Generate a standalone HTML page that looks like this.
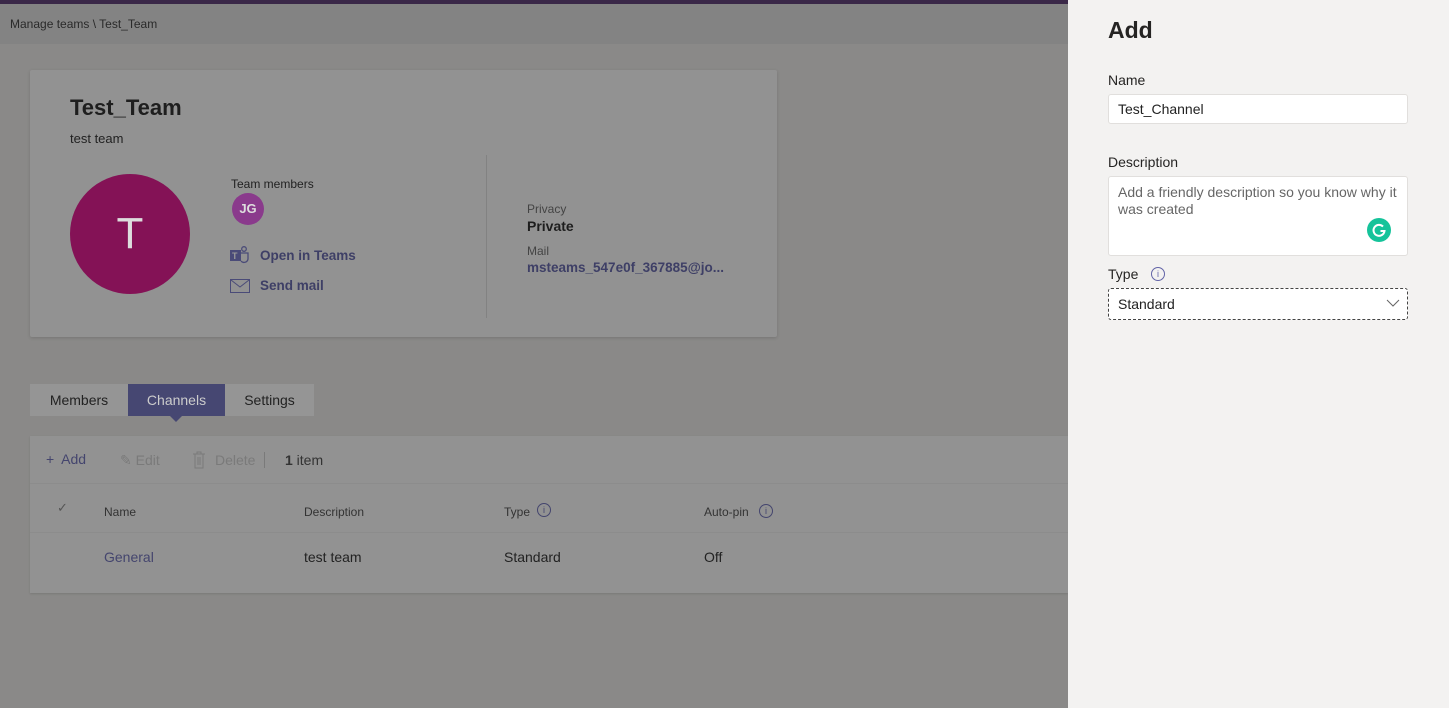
<!DOCTYPE html>
<html><head><meta charset="utf-8"><style>
*{box-sizing:border-box;margin:0;padding:0}
body{width:1449px;height:708px;overflow:hidden;background:#8a8988;font-family:"Liberation Sans",sans-serif;position:relative;color:#222}
.abs{position:absolute}
.top{left:0;top:0;width:1068px;height:4px;background:#3a2848}
.hdr{left:0;top:4px;width:1068px;height:40px;background:#838383;font-size:12px;color:#2a2a2a;padding:13px 10px}
.card{left:30px;top:70px;width:747px;height:267px;background:#929292;box-shadow:0 1px 3px rgba(0,0,0,.15);border-radius:2px}
.av{left:70px;top:174px;width:120px;height:120px;border-radius:50%;background:#841256;color:#ddd;font-size:44px;text-align:center;line-height:120px}
.jg{left:232px;top:193px;width:32px;height:32px;border-radius:50%;background:#8a3a8c;color:#ddd;font-size:13px;font-weight:bold;text-align:center;line-height:32px}
.lnk{color:#3e3f66;font-weight:bold;font-size:13.5px}
.tabs{left:30px;top:384px;width:284px;height:32px;background:#959595;font-size:14px;color:#222}
.tab{position:absolute;top:0;height:32px;line-height:32px;text-align:center}
.tbl{left:30px;top:436px;width:1038px;height:157px;background:#929292;box-shadow:0 1px 2px rgba(0,0,0,.12)}
.panel{left:1068px;top:0;width:381px;height:708px;background:#f3f2f1}
.inp{position:absolute;left:40px;width:300px;background:#fff;border:1px solid #e1dfdd;border-radius:3px;font-size:14px;color:#222;padding-left:9px}
.lbl{position:absolute;left:40px;font-size:14px;color:#252423}
</style></head><body>
<div class="abs top"></div>
<div class="abs hdr">Manage teams \ Test_Team</div>
<div class="abs card"></div>
<div class="abs" style="left:70px;top:95px;font-size:22px;font-weight:bold;color:#1e1e1e">Test_Team</div>
<div class="abs" style="left:70px;top:131px;font-size:13px;color:#222">test team</div>
<div class="abs av">T</div>
<div class="abs" style="left:231px;top:177px;font-size:12px;color:#222">Team members</div>
<div class="abs jg">JG</div>
<svg class="abs" style="left:229px;top:246px" width="22" height="20" viewBox="0 0 22 20"><rect x="1" y="4" width="11" height="11" fill="#4a4b78"/><text x="3" y="13" font-size="9" fill="#999" font-family="Liberation Sans" font-weight="bold">T</text><circle cx="15" cy="3" r="2.3" fill="none" stroke="#4a4b78" stroke-width="1.3"/><path d="M12 7h7v6a4 4 0 0 1-7 2" fill="none" stroke="#4a4b78" stroke-width="1.3"/></svg>
<div class="abs lnk" style="left:260px;top:248px">Open in Teams</div>
<svg class="abs" style="left:230px;top:279px" width="20" height="14"><rect x="0.5" y="0.5" width="19" height="13" fill="none" stroke="#4a4b78"/><path d="M1 1l9 7 9-7" fill="none" stroke="#4a4b78"/></svg>
<div class="abs lnk" style="left:260px;top:278px">Send mail</div>
<div class="abs" style="left:486px;top:155px;width:1px;height:163px;background:#828282"></div>
<div class="abs" style="left:527px;top:202px;font-size:12px;color:#444">Privacy</div>
<div class="abs" style="left:527px;top:218px;font-size:14px;font-weight:bold;color:#1e1e1e">Private</div>
<div class="abs" style="left:527px;top:244px;font-size:12px;color:#444">Mail</div>
<div class="abs lnk" style="left:527px;top:260px">msteams_547e0f_367885@jo...</div>
<div class="abs tabs">
<div class="tab" style="left:0;width:98px">Members</div>
<div class="tab" style="left:98px;width:97px;background:#464772;color:#ccc">Channels</div>
<div class="tab" style="left:195px;width:89px">Settings</div>
</div>
<div class="abs" style="left:170px;top:416px;width:0;height:0;border-left:6px solid transparent;border-right:6px solid transparent;border-top:6px solid #464772"></div>
<div class="abs tbl"></div>
<div class="abs" style="left:30px;top:483px;width:1038px;height:1px;background:#8c8c8c"></div>
<div class="abs" style="left:30px;top:532px;width:1038px;height:1px;background:#8c8c8c"></div>
<div class="abs" style="left:46px;top:451px;font-size:14px;color:#44456e">+&nbsp; Add</div>
<div class="abs" style="left:120px;top:452px;font-size:14px;color:#7a7a7a">✎ Edit</div>
<svg class="abs" style="left:192px;top:451px" width="14" height="18"><path d="M1 3h12M5 3V1h4v2M3 3v14h8V3M6 6v8M8 6v8" fill="none" stroke="#7a7a7a"/></svg>
<div class="abs" style="left:215px;top:452px;font-size:14px;color:#7a7a7a">Delete</div>
<div class="abs" style="left:264px;top:452px;width:1px;height:16px;background:#7a7a7a"></div>
<div class="abs" style="left:285px;top:452px;font-size:14px;color:#333"><b>1</b> item</div>
<div class="abs" style="left:57px;top:500px;font-size:13px;color:#555">✓</div>
<div class="abs" style="left:104px;top:505px;font-size:12px;color:#333">Name</div>
<div class="abs" style="left:304px;top:505px;font-size:12px;color:#333">Description</div>
<div class="abs" style="left:504px;top:505px;font-size:12px;color:#333">Type</div>
<div class="abs" style="left:537px;top:503px;width:14px;height:14px;border:1px solid #44456e;border-radius:50%;font-size:9px;text-align:center;line-height:12px;color:#44456e">i</div>
<div class="abs" style="left:704px;top:505px;font-size:12px;color:#333">Auto-pin</div>
<div class="abs" style="left:759px;top:504px;width:14px;height:14px;border:1px solid #44456e;border-radius:50%;font-size:9px;text-align:center;line-height:12px;color:#44456e">i</div>
<div class="abs" style="left:104px;top:549px;font-size:14px;color:#44456e">General</div>
<div class="abs" style="left:304px;top:549px;font-size:14px;color:#222">test team</div>
<div class="abs" style="left:504px;top:549px;font-size:14px;color:#222">Standard</div>
<div class="abs" style="left:704px;top:549px;font-size:14px;color:#222">Off</div>

<div class="abs panel">
<div class="abs" style="left:40px;top:17px;font-size:23px;font-weight:bold;color:#252423">Add</div>
<div class="lbl" style="top:72px">Name</div>
<div class="inp" style="top:94px;height:30px;line-height:28px">Test_Channel</div>
<div class="lbl" style="top:154px">Description</div>
<div class="inp" style="top:176px;height:80px;padding-top:7px;line-height:17px;color:#666;padding-right:6px">Add a friendly description so you know why it was created</div>
<div class="abs" style="left:299px;top:218px;width:24px;height:24px;border-radius:50%;background:#15c39a"></div>
<svg class="abs" style="left:299px;top:218px" width="24" height="24"><path d="M16 8.5A5.5 5.5 0 1 0 17.5 13h-4" fill="none" stroke="#fff" stroke-width="2"/></svg>
<div class="lbl" style="top:266px">Type</div>
<div class="abs" style="left:83px;top:267px;width:14px;height:14px;border:1px solid #6264a7;border-radius:50%;font-size:9px;text-align:center;line-height:12px;color:#6264a7">i</div>
<div class="inp" style="top:288px;height:32px;line-height:30px;border:1px dashed #444">Standard</div>
<svg class="abs" style="left:318px;top:299px" width="14" height="8"><path d="M1 1l6 6 6-6" fill="none" stroke="#666"/></svg>
</div>
</body></html>
